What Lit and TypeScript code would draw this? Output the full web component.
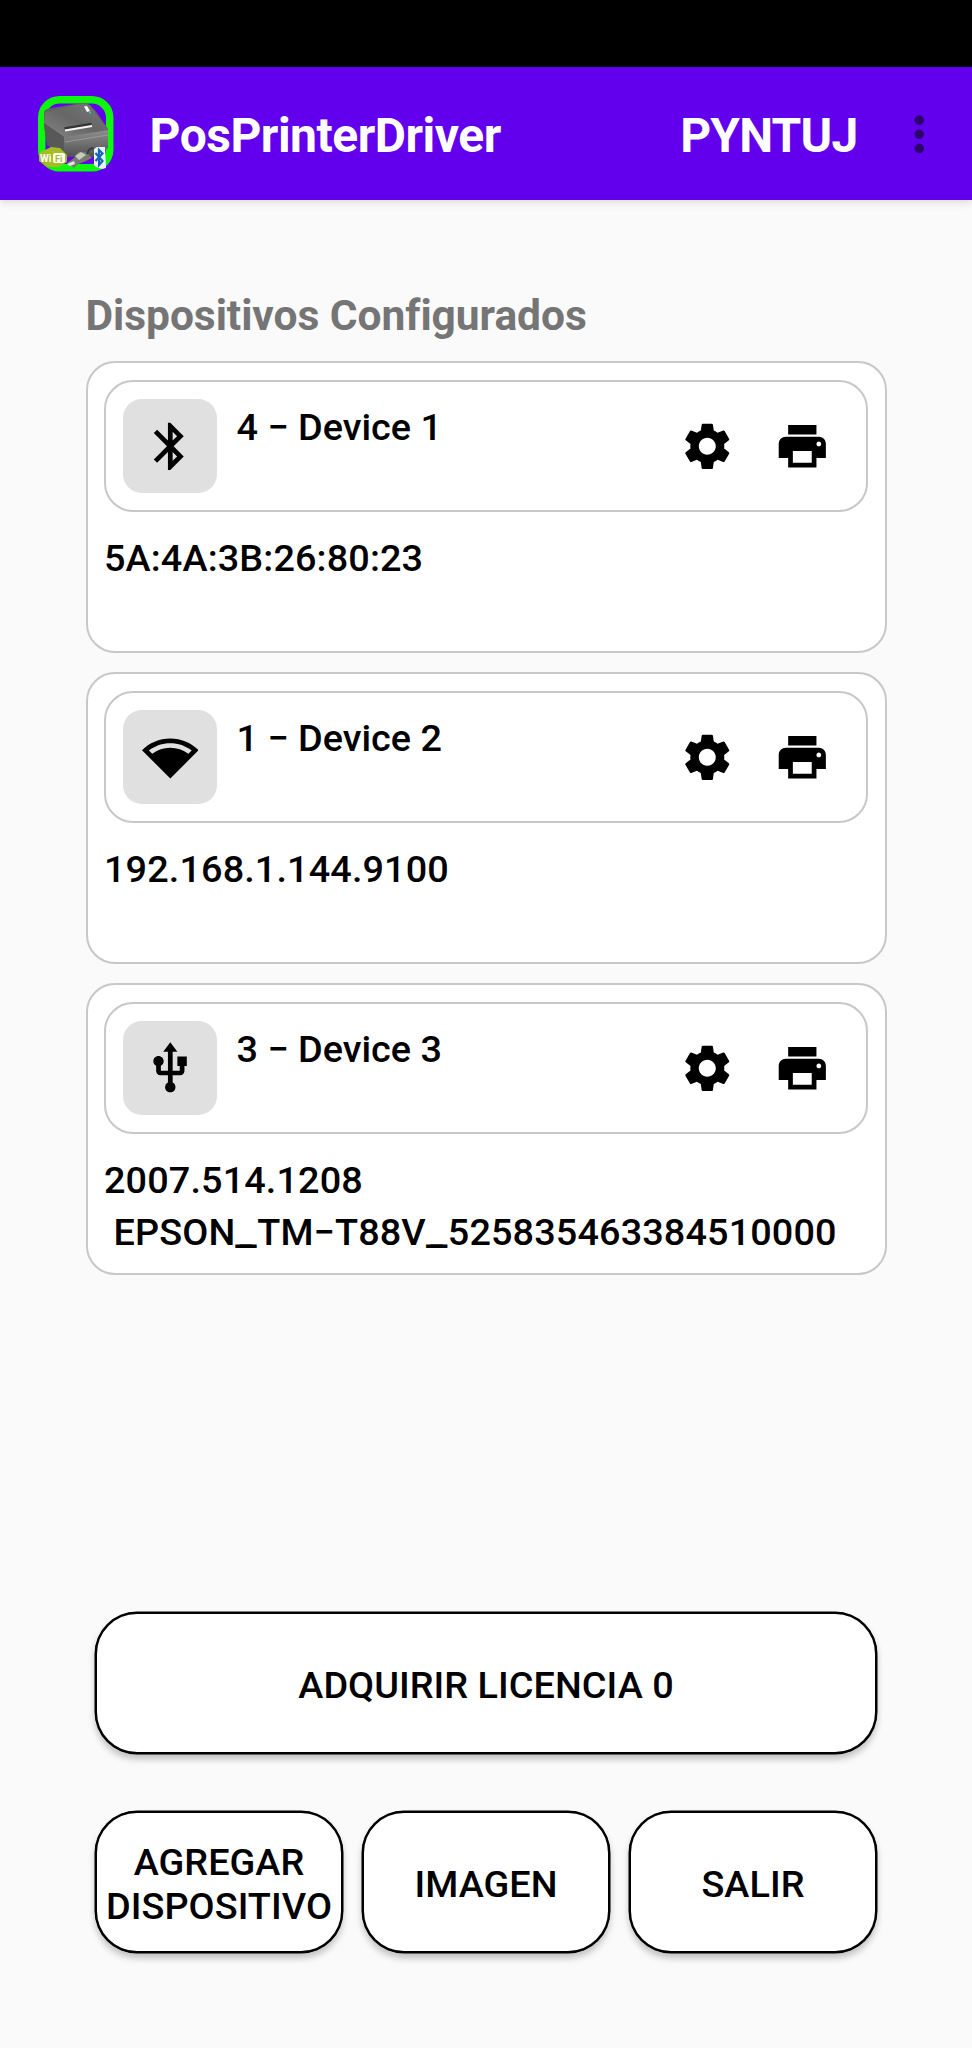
import { LitElement, html, css, svg } from "lit";
import { customElement, property } from "lit/decorators.js";

const ICONS: Record<string, string> = {
  bluetooth:
    "M17.71 7.71L12 2h-1v7.59L6.41 5 5 6.41 10.59 12 5 17.59 6.41 19 11 14.41V22h1l5.71-5.71-4.3-4.29 4.3-4.29zM13 5.83l1.88 1.88L13 9.59V5.83zm1.88 10.46L13 18.17v-3.76l1.88 1.88z",
  wifi:
    "M24 8.98C20.93 5.9 16.69 4 12 4S3.07 5.9 0 8.98L12 21 24 8.98zM2.92 9.07C5.51 7.08 8.67 6 12 6s6.49 1.08 9.08 3.07l-1.43 1.43C17.5 8.94 14.86 8 12 8s-5.5.94-7.65 2.51L2.92 9.07z",
  usb:
    "M15 7v4h1v2h-3V5h2l-3-4-3 4h2v8H8v-2.07c.7-.37 1.2-1.08 1.2-1.93 0-1.21-.99-2.2-2.2-2.2-1.21 0-2.2.99-2.2 2.2 0 .85.5 1.56 1.2 1.93V13c0 1.11.89 2 2 2h3v3.05c-.71.37-1.2 1.1-1.2 1.95 0 1.22.99 2.2 2.2 2.2 1.21 0 2.2-.98 2.2-2.2 0-.85-.49-1.58-1.2-1.95V15h3c1.11 0 2-.89 2-2v-2h1V7h-4z",
  settings:
    "M19.14 12.94c.04-.3.06-.61.06-.94 0-.32-.02-.64-.07-.94l2.03-1.58c.18-.14.23-.41.12-.61l-1.92-3.32c-.12-.22-.37-.29-.59-.22l-2.39.96c-.5-.38-1.03-.7-1.62-.94l-.36-2.54c-.04-.24-.24-.41-.48-.41h-3.84c-.24 0-.43.17-.47.41l-.36 2.54c-.59.24-1.13.57-1.62.94l-2.39-.96c-.22-.08-.47 0-.59.22L2.74 8.87c-.12.21-.08.47.12.61l2.03 1.58c-.05.3-.09.63-.09.94s.02.64.07.94l-2.03 1.58c-.18.14-.23.41-.12.61l1.92 3.32c.12.22.37.29.59.22l2.39-.96c.5.38 1.03.7 1.62.94l.36 2.54c.05.24.24.41.48.41h3.84c.24 0 .44-.17.47-.41l.36-2.54c.59-.24 1.13-.56 1.62-.94l2.39.96c.22.08.47 0 .59-.22l1.92-3.32c.12-.22.07-.47-.12-.61l-2.01-1.58zM12 15.6c-1.98 0-3.6-1.62-3.6-3.6s1.62-3.6 3.6-3.6 3.6 1.62 3.6 3.6-1.62 3.6-3.6 3.6z",
  print:
    "M19 8H5c-1.66 0-3 1.34-3 3v6h4v4h12v-4h4v-6c0-1.66-1.34-3-3-3zm-3 11H8v-5h8v5zm3-7c-.55 0-1-.45-1-1s.45-1 1-1 1 .45 1 1-.45 1-1 1zm-1-9H6v4h12V3z",
  more:
    "M12 8c1.1 0 2-.9 2-2s-.9-2-2-2-2 .9-2 2 .9 2 2 2zm0 2c-1.1 0-2 .9-2 2s.9 2 2 2 2-.9 2-2-.9-2-2-2zm0 6c-1.1 0-2 .9-2 2s.9 2 2 2 2-.9 2-2-.9-2-2-2z",
};

@customElement("md-icon")
export class MdIcon extends LitElement {
  @property() name = "";
  static styles = css`
    :host { display: block; width: 56.6px; height: 56.6px; flex: none; }
    svg { display: block; width: 100%; height: 100%; fill: currentColor; }
  `;
  render() {
    return html`<svg viewBox="0 0 24 24">${svg`<path d=${ICONS[this.name]} />`}</svg>`;
  }
}

@customElement("app-logo")
export class AppLogo extends LitElement {
  static styles = css`
    :host { display: block; width: 76px; height: 78px; flex: none; }
    svg { display: block; width: 100%; height: 100%; }
    text { font-family: Roboto, sans-serif; font-weight: 700; letter-spacing: 0; }
  `;
  render() {
    return html`<svg viewBox="0 0 76 78">
      <defs>
        <linearGradient id="top" x1="0" y1="1" x2="1" y2="0">
          <stop offset="0" stop-color="#858585" />
          <stop offset="0.5" stop-color="#666" />
          <stop offset="1" stop-color="#7c7c7c" />
        </linearGradient>
        <linearGradient id="front" x1="0" y1="0" x2="0" y2="1">
          <stop offset="0" stop-color="#8d8d8d" />
          <stop offset="0.4" stop-color="#767676" />
          <stop offset="1" stop-color="#505050" />
        </linearGradient>
      </defs>
      <rect x="3.750" y="4.750" width="68" height="68" rx="18" fill="none" stroke="#0cf80c" stroke-width="7.500" />
      <path d="M6 17Q7 14 11 13.500L43 8Q48 7 52 10L57 15 70 34V52L60 60 26 60 9 48 6 32Z" fill="#626262" />
      <path d="M7 17L44 8.500Q49 8 52 11L70 35 45 39 26 42 6 28Z" fill="url(#top)" />
      <path d="M6 28L26 42V62L9 50Z" fill="#585858" />
      <path d="M26 42L70 35V53L56 62H26Z" fill="url(#front)" />
      <path d="M27 47L70 40" stroke="#999" stroke-width="1" />
      <path d="M26.500 33.500L53.500 29" stroke="#333" stroke-width="2.500" />
      <path d="M27 35.500L54 31" stroke="#f5f5f5" stroke-width="2.200" />
      <path d="M46 11.500L49 11 52 16 49 17Z" fill="#fff" />
      <circle cx="52" cy="17.500" r="1.100" fill="#22cfd8" />
      <path d="M13 52L22 53 29 60V67L21 72H9L1 66V58Z" fill="#a3bd22" />
      <text x="2" y="67" font-size="10" fill="#fff">Wi</text>
      <rect x="15" y="58" width="12" height="10" rx="2" fill="#fff" />
      <text x="17" y="66.500" font-size="9" fill="#a3bd22">Fi</text>
      <path d="M29 68L36 63 40 57 48 57 54 63 46 67 40 69 36 73Z" fill="#77796f" />
      <path d="M37 61L43 57 48 60 41 65Z" fill="#c9c9c4" />
      <path d="M29 69L36 66 37 69 32 71Z" fill="#e4e4e4" />
      <path d="M49 59Q52 51 56 54" fill="none" stroke="#39393c" stroke-width="2" />
      <path d="M56 54L59 52H67L68 73 64 74 58 72 56 70Z" fill="#e8f2fb" />
      <path d="M57.500 58L64.500 66 61 70V55L64.500 58.500 57.500 66" fill="none" stroke="#1767b4" stroke-width="2.200" />
    </svg>`;
  }
}

interface Device { icon: string; name: string; lines: string; }

const DEVICES: Device[] = [
  { icon: "bluetooth", name: "4 − Device 1", lines: "5A:4A:3B:26:80:23" },
  { icon: "wifi", name: "1 − Device 2", lines: "192.168.1.144.9100" },
  { icon: "usb", name: "3 − Device 3", lines: "2007.514.1208\n EPSON_TM−T88V_525835463384510000" },
];

@customElement("device-card")
export class DeviceCard extends LitElement {
  @property({ attribute: false }) device!: Device;
  static styles = css`
    :host {
      display: block; box-sizing: border-box; height: 292px; padding: 17px 17px 17px 16.500px;
      border: 2px solid #c8c8c8; border-radius: 29px; background: #fff;
    }
    .head {
      display: flex; box-sizing: border-box; height: 132px; padding: 17px 35px 17px 17px;
      border: 2px solid #c8c8c8; border-radius: 29px;
    }
    .badge {
      display: flex; align-items: center; justify-content: center; flex: none;
      width: 94px; height: 94px; border-radius: 19px; background: #e0e0e0;
    }
    .name { flex: 1; padding: 2.500px 0 0 19.500px; line-height: 50px; letter-spacing: 0; }
    .actions { display: flex; align-items: center; gap: 38px; }
    .info { margin-top: 21.300px; line-height: 51.700px; white-space: pre; }
    .score { letter-spacing: 5px; text-shadow: 4.500px 0 0 #000; }
  `;
  render() {
    const parts = this.device.lines.split("_");
    return html`
      <div class="head">
        <div class="badge"><md-icon name=${this.device.icon}></md-icon></div>
        <div class="name">${this.device.name}</div>
        <div class="actions"><md-icon name="settings"></md-icon><md-icon name="print"></md-icon></div>
      </div>
      <div class="info">${parts.map((p, i) => (i ? html`<span class="score">_</span>${p}` : p))}</div>
    `;
  }
}

@customElement("app-root")
export class AppRoot extends LitElement {
  static styles = css`
    :host {
      display: flex; flex-direction: column; box-sizing: border-box; height: 2048px;
      background: #fafafa; color: #000;
      font: 500 37.800px Roboto, sans-serif; letter-spacing: 0.120px;
    }
    .status { height: 67px; background: #000; flex: none; }
    .bar {
      display: flex; align-items: center; box-sizing: border-box; height: 133px; flex: none;
      padding: 0 24px 0 38px; background: #6200ee; color: #fff;
      box-shadow: 0 2px 8px rgba(0, 0, 0, 0.14);
      font-size: 48px; font-weight: 700; letter-spacing: -0.500px;
    }
    .title { margin-left: 35.500px; padding-top: 3px; flex: 1; }
    .side { padding-top: 3px; letter-spacing: -0.800px; }
    .more { margin-left: 34px; padding-top: 1px; color: #2c026b; }
    main { flex: 1; display: flex; flex-direction: column; padding: 86px 85.500px 94.700px; }
    h1 { margin: 0; font-size: 42.500px; line-height: 60px; font-weight: 700; color: #757575; letter-spacing: -0.050px; }
    .devices { display: flex; flex-direction: column; gap: 19px; margin-top: 15px; }
    .actions { margin-top: auto; padding: 0 9.500px; display: grid; grid-template-columns: repeat(3, 1fr); column-gap: 19px; row-gap: 57px; }
    .btn {
      box-sizing: border-box; height: 142px; padding: 4px 0 0; border: 2px solid #000; border-radius: 42px;
      background: #fff; color: #000; font: inherit; line-height: 44.500px; letter-spacing: 0.050px;
      box-shadow: 0 0 0 0.500px #000, 0 5px 7px rgba(0, 0, 0, 0.24);
    }
    .wide { grid-column: 1 / -1; }
  `;
  render() {
    return html`
      <div class="status"></div>
      <header class="bar">
        <app-logo></app-logo>
        <span class="title">PosPrinterDriver</span>
        <span class="side">PYNTUJ</span>
        <md-icon class="more" name="more"></md-icon>
      </header>
      <main>
        <h1>Dispositivos Configurados</h1>
        <div class="devices">${DEVICES.map((d) => html`<device-card .device=${d}></device-card>`)}</div>
        <div class="actions">
          <button class="btn wide">ADQUIRIR LICENCIA 0</button>
          <button class="btn">AGREGAR DISPOSITIVO</button>
          <button class="btn">IMAGEN</button>
          <button class="btn">SALIR</button>
        </div>
      </main>
    `;
  }
}
